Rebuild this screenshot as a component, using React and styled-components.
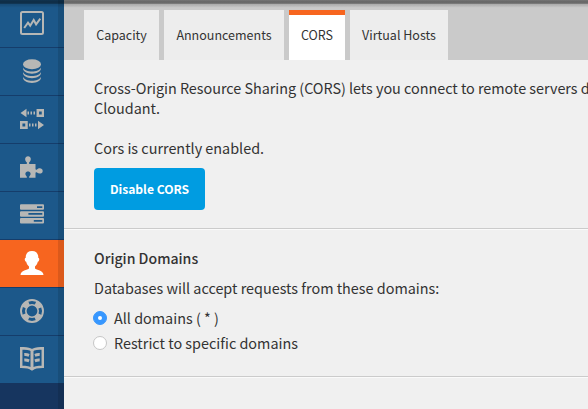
import React from 'react';
import styled, { createGlobalStyle } from 'styled-components';

const GlobalStyle = createGlobalStyle`
  * { box-sizing: border-box; }
  body {
    margin: 0;
    overflow: hidden;
    background: #f0f0f0;
    color: #333;
    font-family: "Noto Sans CJK SC", "Noto Sans", sans-serif;
  }
`;

const Page = styled.div`
  display: flex;
  width: 588px;
  height: 409px;
  overflow: hidden;
  position: relative;
`;

const TopShadow = styled.div`
  position: absolute;
  inset: 0 0 auto 0;
  height: 8px;
  background: linear-gradient(
    rgba(0, 0, 0, 0.44) 0 1px,
    rgba(0, 0, 0, 0.48) 1px 3px,
    rgba(0, 0, 0, 0.4) 3px 4px,
    rgba(0, 0, 0, 0.14) 4px 5px,
    rgba(0, 0, 0, 0.1) 5px 6px,
    rgba(0, 0, 0, 0.06) 6px 7px,
    rgba(0, 0, 0, 0.01) 7px 8px
  );
  pointer-events: none;
`;

const SideShadow = styled.div`
  position: absolute;
  inset: 0 auto 0 58px;
  width: 6px;
  background: rgba(0, 0, 0, 0.11);
  pointer-events: none;
`;

const Sidebar = styled.nav`
  display: flex;
  flex-direction: column;
  flex: 0 0 64px;
  background: #16355f;
`;

const NavItem = styled.a`
  display: flex;
  justify-content: center;
  align-items: flex-start;
  flex: 0 0 ${(p) => (p.$last ? 47 : 48)}px;
  padding-top: 11px;
  border-bottom: 1px solid ${(p) => (p.$last ? '#1c588a' : '#153d6b')};
  background: ${(p) => (p.$active ? '#f7651f' : '#1c588a')};
  color: ${(p) => (p.$active ? '#fff' : '#b7b7b5')};
  svg { display: block; width: 24px; height: 24px; }
`;

const Main = styled.main`
  display: flex;
  flex-direction: column;
  flex: 1;
  min-width: 0;
`;

const Tabs = styled.div`
  display: flex;
  gap: 5px;
  height: 60px;
  padding: 10px 0 0 20px;
  background: #cacaca;
`;

const Tab = styled.div`
  display: flex;
  justify-content: center;
  width: ${(p) => p.$width}px;
  height: 50px;
  border-top: 5px solid ${(p) => (p.$active ? '#f7651f' : '#ededed')};
  background: ${(p) => (p.$active ? '#fff' : '#ededed')};
  font-size: 12.5px;
  line-height: 40px;
  white-space: nowrap;
`;

const Section = styled.section`
  height: ${(p) => p.$height}px;
  padding: ${(p) => p.$top}px 0 0 30px;
  border-bottom: 1px solid #cbcbcb;
  box-shadow: 0 1px 0 #fafafa;
`;

const Text = styled.p`
  margin: 0 0 ${(p) => p.$after || 0}px;
  font-size: ${(p) => (p.$strong ? 14.1 : 14.4)}px;
  line-height: 20px;
  font-weight: ${(p) => (p.$strong ? 500 : 400)};
  letter-spacing: ${(p) => p.$spacing || 0}px;
  white-space: nowrap;
`;

const Button = styled.button`
  display: block;
  width: 111px;
  height: 42px;
  padding: 0 0 1px;
  border: 0;
  border-radius: 4px;
  background: #009ce1;
  color: #fff;
  font: 700 12.1px "Noto Sans CJK SC", sans-serif;
`;

const Option = styled.label`
  display: flex;
  align-items: center;
  gap: 7px;
  height: 25px;
  margin-left: -1px;
`;

const Radio = styled.span`
  display: flex;
  align-items: center;
  justify-content: center;
  width: 14px;
  height: 14px;
  border-radius: 50%;
  border: 1px solid ${(p) => (p.$checked ? '#3b97fb' : '#c6c6c6')};
  background: ${(p) => (p.$checked ? '#3797ff' : '#fff')};
  &::after {
    content: '';
    width: 4px;
    height: 4px;
    border-radius: 50%;
    background: #fff;
  }
`;

const ChartIcon = () => (
  <svg viewBox="0 0 24 24" fill="none" stroke="currentColor">
    <rect x="1" y="1" width="22" height="22" rx="1.5" strokeWidth="2" />
    <path d="M4.200 17l3.800-5.300 2.200 3 3.500-5.700 2.400 4.300L20.300 7.700" strokeWidth="2" />
  </svg>
);

const DatabaseIcon = () => (
  <svg viewBox="0 0 24 24" fill="currentColor">
    <ellipse cx="12" cy="5.200" rx="9" ry="5" />
    {[0, 4.6, 9.2].map((y) => (
      <path key={y} transform={`translate(0 ${y})`} d="M3 8.500c1.200 2.600 4.800 4 9 4s7.800-1.400 9-4c.3 4-4 6.200-9 6.200S2.700 12.500 3 8.500z" />
    ))}
  </svg>
);

const ReplicationIcon = () => (
  <svg viewBox="0 0 24 24" fill="currentColor">
    <path d="M0.500 6l6-4.300v8.600zM24 18l-6-4.300v8.600z" />
    <path d="M7.500 4.500H9v3H7.500zm3 0H12v3h-1.500zm3 0H15v3h-1.500zM9 16.500h1.500v3H9zm3 0h1.500v3H12zm3 0h1.500v3H15z" />
    <path fill="none" stroke="currentColor" strokeWidth="2.500" d="M17.800 3.300H23v5.400h-5.200zM1.200 15.300h5.300v5.400H1.200z" />
  </svg>
);

const PuzzleIcon = () => (
  <svg viewBox="0 0 24 24" fill="currentColor">
    <path d="M0 9h6.300c.7 0 .9-.9.400-1.700C4.300 5.200 4.700 1.200 8 1.200s3.700 4 1.300 6.100c-.5.800-.3 1.700.4 1.700h5.800v4.800c0 1 .7 1.200 1.500.6 1.700-1.900 5.700-1.600 5.700 1.500s-4 3.400-5.700 1.600c-.8-.6-1.500-.4-1.500.6v4.600H9.800c-.7 0-.9-.7-.5-1.300 2.300-2.200 1.300-4.900-1.300-4.900s-3.600 2.700-1.300 4.900c.4.600.2 1.300-.5 1.300H0z" />
  </svg>
);

const ServerIcon = () => (
  <svg viewBox="0 0 24 24">
    <path fill="currentColor" d="M1 1.300h22q1 0 1 1v3.500q0 1-1 1H1q-1 0-1-1V2.300q0-1 1-1zM1 8.200h22q1 0 1 1v3.500q0 1-1 1H1q-1 0-1-1V9.200q0-1 1-1zM1 15.100h22q1 0 1 1v3.500q0 1-1 1H1q-1 0-1-1v-3.500q0-1 1-1z" />
    <path stroke="#1c588a" strokeWidth="1.700" d="M17 4.050h5.300M8.400 10.950h13.900M13.800 17.850h8.500" />
  </svg>
);

const UserIcon = () => (
  <svg viewBox="0 0 24 24" fill="currentColor">
    <path d="M12 0c4.300 0 6.500 2.800 6.300 6.900 1.500-.1 1.200 3.100-.5 3.900-.5 2-1.400 3.500-2.800 4.600v2.100c1.300 1.700 8.500 1.800 8.500 6.500H.5c0-4.700 7.200-4.800 8.500-6.500v-2.100c-1.400-1.100-2.300-2.600-2.800-4.600-1.700-.8-2-4-.5-3.900C5.500 2.800 7.700 0 12 0z" />
  </svg>
);

const SupportIcon = () => (
  <svg viewBox="0 0 24 24" fill="none" stroke="currentColor">
    <circle cx="12" cy="12" r="11" strokeWidth="1.900" />
    <circle cx="12" cy="12" r="6.200" strokeWidth="1.600" />
    <circle cx="12" cy="12" r="8.700" strokeWidth="5" strokeDasharray="6.833 6.833" strokeDashoffset="-3.400" />
  </svg>
);

const BookIcon = () => (
  <svg viewBox="0 0 24 24" fill="none" stroke="currentColor">
    <path strokeWidth="2.500" d="M12 3.300C9 1.200 5.500 1.200 1.200 1.200v18.500c4.300 0 7.800 0 10.800 2.500 3-2.500 6.500-2.500 10.800-2.500V1.200c-4.300 0-7.800 0-10.800 2.100z" />
    <path strokeWidth="3" d="M12 3v19.500" />
    <path strokeWidth="3" d="M4.300 7.600q2.500-.2 4.800.7M4.300 13.100q2.500-.2 4.800.7M19.700 7.600q-2.500-.2-4.800.7M19.700 13.100q-2.500-.2-4.800.7" />
  </svg>
);

const navigation = [
  ['metrics', ChartIcon],
  ['databases', DatabaseIcon],
  ['replication', ReplicationIcon],
  ['plugins', PuzzleIcon],
  ['tasks', ServerIcon],
  ['account', UserIcon],
  ['support', SupportIcon],
  ['documentation', BookIcon],
];

export default function App() {
  return (
    <>
      <GlobalStyle />
      <Page>
        <Sidebar>
          {navigation.map(([name, Icon], i) => (
            <NavItem key={name} $active={name === 'account'} $last={i === navigation.length - 1}>
              <Icon />
            </NavItem>
          ))}
        </Sidebar>
        <Main>
          <Tabs>
            <Tab $width={75}>Capacity</Tab>
            <Tab $width={120}>Announcements</Tab>
            <Tab $width={56} $active>CORS</Tab>
            <Tab $width={98}>Virtual Hosts</Tab>
          </Tabs>
          <Section $height={169} $top={18}>
            <Text $spacing={-0.025}>Cross-Origin Resource Sharing (CORS) lets you connect to remote servers d</Text>
            <Text $after={20}>Cloudant.</Text>
            <Text $after={10}>Cors is currently enabled.</Text>
            <Button>Disable CORS</Button>
          </Section>
          <Section $height={148} $top={19}>
            <Text $strong $after={10}>Origin Domains</Text>
            <Text $after={7}>Databases will accept requests from these domains:</Text>
            <Option>
              <Radio $checked />
              <Text>All domains ( * )</Text>
            </Option>
            <Option>
              <Radio />
              <Text>Restrict to specific domains</Text>
            </Option>
          </Section>
        </Main>
        <SideShadow />
        <TopShadow />
      </Page>
    </>
  );
}
